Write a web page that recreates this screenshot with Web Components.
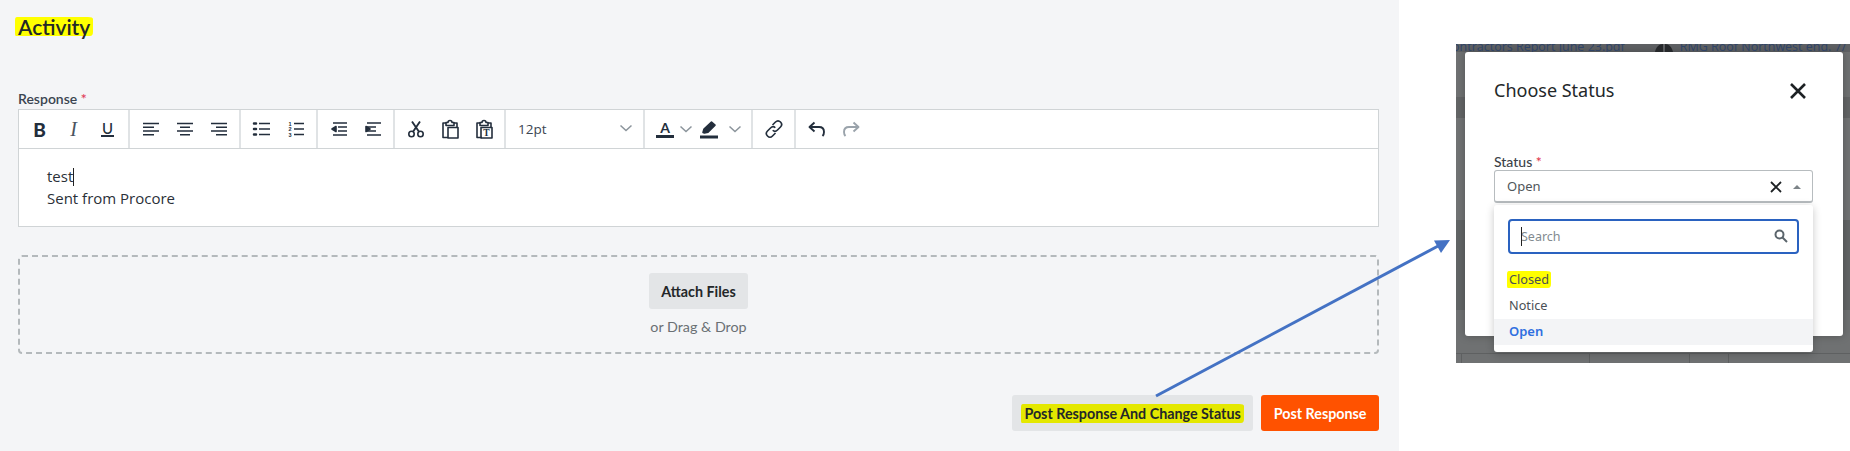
<!DOCTYPE html>
<html lang="en"><head><meta charset="utf-8"><title>Activity</title>
<style>
html,body{margin:0;padding:0;background:#fff}
body{width:1850px;height:451px;overflow:hidden;font-family:"Lato","Liberation Sans",sans-serif}
svg.i{width:20px;height:20px;display:block;fill:none;stroke:#232e3c;stroke-width:1.6;stroke-linecap:butt;stroke-linejoin:round}
</style></head><body>
<script>
function def(name,css,html){customElements.define(name,class extends HTMLElement{constructor(){super();this.attachShadow({mode:'open'}).innerHTML='<style>'+css+'</style>'+html}})}
def('rt-page',':host{display:flex;width:1850px;height:451px;position:relative}','<slot></slot>');
def('rt-main',':host{display:flex;flex-direction:column;box-sizing:border-box;width:1399px;height:451px;background:#f4f5f7;padding:13px 20px 0 18px;color:#232729}','<slot></slot>');
def('rt-heading',':host{display:block;font:600 21px/19px "Lato",sans-serif;color:#232729;margin:4px 0 44px;height:28px}','<slot></slot>');
def('rt-hl',':host{display:inline-block;background:var(--hl,#ffff00);padding:var(--pad,0 3px);margin:var(--m,0 -3px);line-height:var(--lh,inherit);border-radius:2px 5px 3px 1px/3px 2px 4px 2px}','<slot></slot>');
def('rt-label',':host{display:block;font:600 14px/20px "Lato",sans-serif;color:#3a4450}b{color:#e0405a;font-weight:600}','<slot></slot> <b>*</b>');
def('rt-editor',':host{display:block;border:1px solid #d0d4d6;background:#fff;height:118px;box-sizing:border-box}','<slot></slot>');
def('rt-toolbar',':host{display:flex;height:38px;border-bottom:1px solid #d0d4d6}','<slot></slot>');
def('tb-group',':host{display:flex;align-items:center;padding:0 3.500px;border-right:2px solid #e0e3e5;box-sizing:border-box}:host(:last-child){border-right:0}','<slot></slot>');
def('tb-btn',':host{display:flex;width:34px;height:38px;align-items:center;justify-content:center;box-sizing:border-box}','<slot></slot>');
def('tb-caret',':host{display:flex;width:20px;height:38px;align-items:center;justify-content:center;margin-left:-6px}svg{width:14px;height:14px;fill:none;stroke:#8b949b;stroke-width:1.5}','<svg viewBox="0 0 14 14"><path d="M1.5 4.5 7 9.5 12.500 4.500"/></svg>');
def('tb-select',':host{display:flex;box-sizing:border-box;width:139px;height:38px;align-items:center;justify-content:space-between;padding:0 10px 0 12px;border-right:2px solid #e0e3e5;font:13.500px "Open Sans",sans-serif;color:#3c4652}svg{width:14px;height:14px;fill:none;stroke:#8b949b;stroke-width:1.5;margin-top:-2px}','<span><slot></slot></span><svg viewBox="0 0 14 14"><path d="M1.500 4.500 7 9.500 12.500 4.500"/></svg>');
def('rt-body',':host{display:block;padding:16px 30px 0 28px;font:15px/22.400px "Open Sans",sans-serif;color:#2a3038}','<slot></slot>');
def('rt-caret',':host{display:inline-block;width:1px;height:18px;background:#222;vertical-align:-4px}','');
def('rt-drop',':host{display:flex;flex-direction:column;align-items:center;box-sizing:border-box;height:99px;margin-top:28px;padding-top:16px;border:2px dashed #b4b9bc;border-radius:4px}p{margin:8px 0 0;font:14.300px/20px "Lato",sans-serif;color:#6a7074}','<slot></slot><p>or Drag &amp; Drop</p>');
def('rt-btn',':host{display:inline-flex;align-items:center;justify-content:center;box-sizing:border-box;height:36px;padding:0 12.500px;border-radius:3px;background:#e3e5e7;color:#232729;font:700 14.300px "Lato",sans-serif}:host([primary]){background:#ff5200;color:#fff}','<slot></slot>');
def('rt-actions',':host{display:flex;justify-content:flex-end;gap:8px;margin-top:41px}','<slot></slot>');
def('rt-side',':host{display:flex;flex:1;padding:44px 0 0 57px;box-sizing:border-box;align-items:flex-start}','<slot></slot>');
def('rt-shot',':host{display:block;position:relative;box-sizing:border-box;width:394px;height:319px;overflow:hidden;background-color:#6c6e6f;background-image:linear-gradient(#5e6061,#5e6061),linear-gradient(#5e6061,#5e6061),linear-gradient(#5e6061,#5e6061),linear-gradient(#5e6061,#5e6061),linear-gradient(#5e6061,#5e6061),linear-gradient(#6f7172 0 53px,#636566 53px 74px,#717374 74px 176px,#626566 176px 266px,#6f7172 266px);background-repeat:no-repeat;background-size:100% 1px,1px 10px,1px 10px,1px 10px,1px 10px,100% 100%;background-position:0 309px,5px 309px,133px 309px,233px 309px,272px 309px,0 0}','<slot></slot>');
def('rt-strip',':host{display:flex;align-items:flex-start;height:8px;overflow:hidden;background:#5f6164;font:12.500px/6px "Open Sans",sans-serif;color:#2f4468;white-space:nowrap}svg{flex:none;width:18px;height:8px;margin:0 7px 0 30px;fill:#26282b}span{flex:none}','<span><slot name="a"></slot></span><svg viewBox="0 0 18 8"><path d="M0 8C1 3 4 0 8 0V8ZM10 0C14 0 17 3 18 8H10Z"/></svg><span><slot name="b"></slot></span>');
def('rt-modal',':host{display:block;box-sizing:border-box;width:378px;height:284px;margin-left:9px;background:#fff;border-radius:3px;padding:26px 29px 0 29px;box-shadow:0 0 8px rgba(0,0,0,.25)}header{display:flex;justify-content:space-between;align-items:center;height:25px;font:400 18px/25px "Noto Sans",sans-serif;color:#232729}svg{width:16px;height:16px;stroke:#1d2124;stroke-width:2.600;fill:none;margin-right:8px}','<header><span>Choose Status</span><svg viewBox="0 0 16 16"><path d="M1 1 15 15M15 1 1 15"/></svg></header><slot></slot>');
def('rt-sel-label',':host{display:block;margin-top:50px;font:500 14px/18px "Lato",sans-serif;color:#3c4349}b{color:#e0304a;font-weight:500}','<slot></slot> <b>*</b>');
def('rt-select',':host{display:block;position:relative;margin-top:-1px;width:319px;height:33px;box-sizing:border-box;border:1px solid #b7bcbf;border-bottom-width:2px;border-radius:3px;background:#fff;font:13px/31px "Noto Sans",sans-serif;color:#50565a}.v{position:absolute;left:12px;top:0}.x{position:absolute;left:275px;top:10px;width:12px;height:12px;stroke:#1d2124;stroke-width:1.800;fill:none}.c{position:absolute;left:298px;top:14px;width:0;height:0;border:4px solid transparent;border-top:0;border-bottom:4px solid #7d8488}::slotted(rt-menu){position:absolute;left:-1px;top:34px}','<span class="v">Open</span><svg class="x" viewBox="0 0 12 12"><path d="M1 1 11 11M11 1 1 11"/></svg><span class="c"></span><slot></slot>');
def('rt-menu',':host{display:block;box-sizing:border-box;width:319px;height:147px;background:#fff;border-radius:3px;padding-top:14px;box-shadow:0 2px 8px rgba(0,0,0,.22)}.s{position:relative;box-sizing:border-box;width:291px;height:35px;margin:0 0 13px 14px;border:2px solid #2a62c0;border-radius:4px;font:12.500px/31px "Noto Sans",sans-serif;color:#828a8f;padding-left:11px}.s i{position:absolute;left:11px;top:6px;width:1px;height:19px;background:#222}.s svg{position:absolute;right:9px;top:8px;width:14px;height:14px;fill:none;stroke:#5b656c;stroke-width:2}','<div class="s"><i></i>Search<svg viewBox="0 0 14 14"><circle cx="5.500" cy="5.500" r="4"/><path d="M8.500 8.500 13 13"/></svg></div><slot></slot>');
def('rt-opt',':host{display:block;height:26px;padding-left:15px;font:12.700px/25px "Noto Sans",sans-serif;color:#4a5055}:host([sel]){background:#f3f4f6;color:#2f6fe0;font-weight:600;font-size:13px}','<slot></slot>');
def('rt-arrow',':host{display:block;position:absolute;inset:0;pointer-events:none}svg{display:block;width:1850px;height:451px}','<svg viewBox="0 0 1850 451"><path d="M1156 396 1440 245" stroke="#4472c4" stroke-width="3" fill="none"/><path d="M1450 240 1434 240.500 1441 253Z" fill="#4472c4"/></svg>');
</script>
<rt-page>
 <rt-main>
  <rt-heading><rt-hl>Activity</rt-hl></rt-heading>
  <rt-label>Response</rt-label>
  <rt-editor>
   <rt-toolbar>
    <tb-group>
     <tb-btn><span style="font:900 19px 'Lato',sans-serif;color:#232e3c">B</span></tb-btn>
     <tb-btn><span style="font:italic 400 20px 'Liberation Serif',serif;color:#4a5460">I</span></tb-btn>
     <tb-btn><span style="font:500 15px/13px 'Lato',sans-serif;color:#232e3c;border-bottom:2px solid #232e3c;padding:0 .5px;">U</span></tb-btn>
    </tb-group>
    <tb-group>
     <tb-btn><svg class="i" viewBox="0 0 20 20"><path d="M2 4.500H18M2 8.200H13M2 12H18M2 15.700H13"/></svg></tb-btn>
     <tb-btn><svg class="i" viewBox="0 0 20 20"><path d="M2 4.500H18M5 8.200H15M2 12H18M5 15.700H15"/></svg></tb-btn>
     <tb-btn><svg class="i" viewBox="0 0 20 20"><path d="M2 4.500H18M7 8.200H18M2 12H18M7 15.700H18"/></svg></tb-btn>
    </tb-group>
    <tb-group>
     <tb-btn><svg class="i" viewBox="0 0 20 20"><path d="M7 4.500H18M7 10H18M7 15.500H18"/><path d="M2 4.500H4M2 10H4M2 15.500H4" stroke-width="2.500" stroke-linecap="round"/></svg></tb-btn>
     <tb-btn><svg class="i" viewBox="0 0 20 20"><path d="M8 4.500H18M8 10H18M8 15.500H18"/><g style="font:700 5.500px 'Liberation Sans',sans-serif;fill:#232e3c;stroke:none"><text x="2.500" y="6.500">1</text><text x="2.500" y="12">2</text><text x="2.500" y="17.500">3</text></g></svg></tb-btn>
    </tb-group>
    <tb-group>
     <tb-btn><svg class="i" viewBox="0 0 20 20"><path d="M4 4H18M9 8H18M9 12H18M4 16H18"/><path d="M7 7.500 3 10 7 12.500Z" fill="#232e3c"/></svg></tb-btn>
     <tb-btn><svg class="i" viewBox="0 0 20 20"><path d="M2 4H16M2 8H11M2 12H11M2 16H16" transform="translate(2)"/><path d="M3 7.500 7 10 3 12.500Z" fill="#232e3c"/></svg></tb-btn>
    </tb-group>
    <tb-group>
     <tb-btn><svg class="i" viewBox="0 0 20 20"><circle cx="5.500" cy="15" r="2.700"/><circle cx="14.500" cy="15" r="2.700"/><path d="M7 12.700 14 2.500M13 12.700 6 2.500" stroke-width="1.900"/></svg></tb-btn>
     <tb-btn><svg class="i" viewBox="0 0 20 20"><path d="M6 4H3V18.500H8M14 4H17V8"/><path d="M6 3.500H8C8 .8 12 .8 12 3.500H14V6.500H6Z"/><path d="M8 8.500H18V19H8Z"/></svg></tb-btn>
     <tb-btn><svg class="i" viewBox="0 0 20 20"><path d="M6 4H3V18.500H8M14 4H17V8"/><path d="M6 3.500H8C8 .8 12 .8 12 3.500H14V6.500H6Z"/><path d="M7 8.500H18V19H7Z"/><text x="9.300" y="17" style="font:700 9.500px 'Liberation Serif',serif;fill:#232e3c;stroke:none">T</text></svg></tb-btn>
    </tb-group>
    <tb-select>12pt</tb-select>
    <tb-group style="padding:0 4px 0 3px;width:108px">
     <tb-btn style="width:34px"><span style="display:block;font:700 14px/15px 'Lato',sans-serif;color:#232e3c;border-bottom:3px solid #232e3c;width:18px;text-align:center;">A</span></tb-btn>
     <tb-caret></tb-caret>
     <tb-btn style="width:28px;margin-left:-1px"><svg class="i" viewBox="0 0 20 20"><path d="M1 18H19" stroke-width="3"/><path d="M4 13.500 5 10 12.500 3 16 6.200 9 13.300 5.500 14Z" fill="#232e3c"/></svg></tb-btn>
     <tb-caret style="margin-left:2px"></tb-caret>
    </tb-group>
    <tb-group>
     <tb-btn><svg class="i" viewBox="0 0 20 20"><path d="M8.500 6 11.500 3C13 1.500 15 1.500 16.500 3 18 4.500 18 6.500 16.500 8L13.500 11C12 12.500 10 12.500 8.700 11.200"/><path d="M11.500 14 8.500 17C7 18.500 5 18.500 3.500 17 2 15.500 2 13.500 3.500 12L6.500 9C8 7.500 10 7.500 11.300 8.800"/></svg></tb-btn>
    </tb-group>
    <tb-group>
     <tb-btn><svg class="i" viewBox="0 0 20 20" style="stroke-width:1.900"><path d="M7.500 3.500 2.500 8 7.500 12.500M2.500 8H12C15 8 17 10 17 13 17 14.500 16.500 16 15.500 17"/></svg></tb-btn>
     <tb-btn><svg class="i" viewBox="0 0 20 20" style="stroke:#9aa3ab;stroke-width:1.900"><path d="M12.500 3.500 17.500 8 12.500 12.500M17.500 8H8C5 8 3 10 3 13 3 14.500 3.500 16 4.500 17"/></svg></tb-btn>
    </tb-group>
   </rt-toolbar>
   <rt-body>test<rt-caret></rt-caret><br>Sent from Procore</rt-body>
  </rt-editor>
  <rt-drop><rt-btn>Attach Files</rt-btn></rt-drop>
  <rt-actions>
   <rt-btn><rt-hl style="--hl:#e4e800;--pad:1px 3px;--m:0 -3px">Post Response And Change Status</rt-hl></rt-btn>
   <rt-btn primary>Post Response</rt-btn>
  </rt-actions>
 </rt-main>
 <rt-side>
  <rt-shot>
   <rt-strip><span slot="a" style="margin-left:-4px;display:inline-block">ontractors Report June 23.pdf</span><span slot="b">RMG Roof Northwest end. 7/</span></rt-strip>
   <rt-modal>
    <rt-sel-label>Status</rt-sel-label>
    <rt-select>
     <rt-menu>
      <rt-opt><rt-hl style="--pad:1px 2px;--m:0 -2px;--lh:15px">Closed</rt-hl></rt-opt>
      <rt-opt>Notice</rt-opt>
      <rt-opt sel>Open</rt-opt>
     </rt-menu>
    </rt-select>
   </rt-modal>
  </rt-shot>
 </rt-side>
 <rt-arrow></rt-arrow>
</rt-page>
</body></html>
